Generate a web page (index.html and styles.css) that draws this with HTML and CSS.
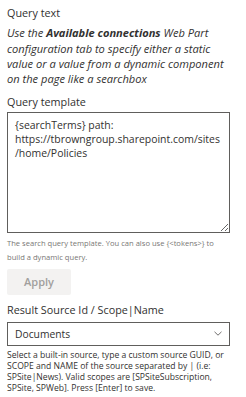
FILE: index.html
```html
<!DOCTYPE html>
<html>
<head>
<meta charset="utf-8">
<link rel="stylesheet" href="styles.css">
</head>
<body>
<div class="pane">
  <div class="label first">Query text</div>
  <p class="note">Use the <b>Available connections</b> Web Part<br>configuration tab to specify either a static<br>value or a value from a dynamic component<br>on the page like a searchbox</p>
  <div class="label tpl">Query template</div>
  <textarea class="query" spellcheck="false">{searchTerms} path: https://tbrowngroup.sharepoint.com/sites
/home/Policies</textarea>
  <div class="help">The search query template. You can also use {&lt;tokens&gt;} to<br>build a dynamic query.</div>
  <button class="apply" disabled>Apply</button>
  <div class="label src">Result Source Id / Scope|Name</div>
  <div class="dropdown">
    <span class="value">Documents</span>
    <svg class="chev" width="8" height="5" viewBox="0 0 8 5"><path d="M0.5 0.8 L4 4.2 L7.5 0.8" fill="none" stroke="#605e5c" stroke-width="0.9"/></svg>
  </div>
  <div class="desc">Select a built-in source, type a custom source GUID, or<br>SCOPE and NAME of the source separated by | (i.e:<br>SPSite|News). Valid scopes are [SPSiteSubscription,<br>SPSite, SPWeb]. Press [Enter] to save.</div>
</div>
</body>
</html>
```
FILE: styles.css
```css
html, body {
  margin: 0;
  padding: 0;
  background: #ffffff;
}
.pane {
  padding: 0 7px;
  width: 223px;
  font-family: "Open Sans", "Noto Sans", sans-serif;
  color: #323130;
}
.label {
  font-size: 10.8px;
  line-height: 15px;
  white-space: nowrap;
}
.label.first {
  margin-top: 5px;
}
.label.tpl {
  margin-top: 7.5px;
}
.label.src {
  margin-top: 7.5px;
}
.note {
  margin: 5.3px 0 0 0;
  font-size: 11.1px;
  line-height: 15.3px;
  font-style: italic;
  white-space: nowrap;
}
.note b {
  font-weight: 700;
}
.query {
  display: block;
  box-sizing: border-box;
  width: 223px;
  height: 121px;
  margin: 3px 0 0 0;
  padding: 5px 7px;
  border: 1px solid #605e5c;
  border-radius: 0;
  font-family: "Open Sans", "Noto Sans", sans-serif;
  font-size: 10.44px;
  line-height: 14px;
  color: #323130;
  background: #fff;
  resize: vertical;
  outline: none;
  overflow: hidden;
}
.help {
  margin-top: 3px;
  font-size: 7.6px;
  line-height: 14px;
  color: #797775;
  white-space: nowrap;
}
.apply {
  display: block;
  margin-top: 5px;
  width: 64px;
  height: 26px;
  border: none;
  border-radius: 2px;
  background: #f3f2f1;
  color: #a19f9d;
  font-family: "Open Sans", "Noto Sans", sans-serif;
  font-size: 11px;
  font-weight: 600;
  padding: 0;
}
.dropdown {
  box-sizing: border-box;
  margin-top: 4.5px;
  height: 24px;
  border: 1px solid #605e5c;
  display: flex;
  align-items: center;
  justify-content: space-between;
  padding: 0 7px 0 7px;
}
.value {
  font-size: 10.3px;
}
.chev {
  display: block;
}
.desc {
  margin-top: 4.5px;
  font-size: 8.6px;
  line-height: 11px;
  color: #323130;
  white-space: nowrap;
}
```
